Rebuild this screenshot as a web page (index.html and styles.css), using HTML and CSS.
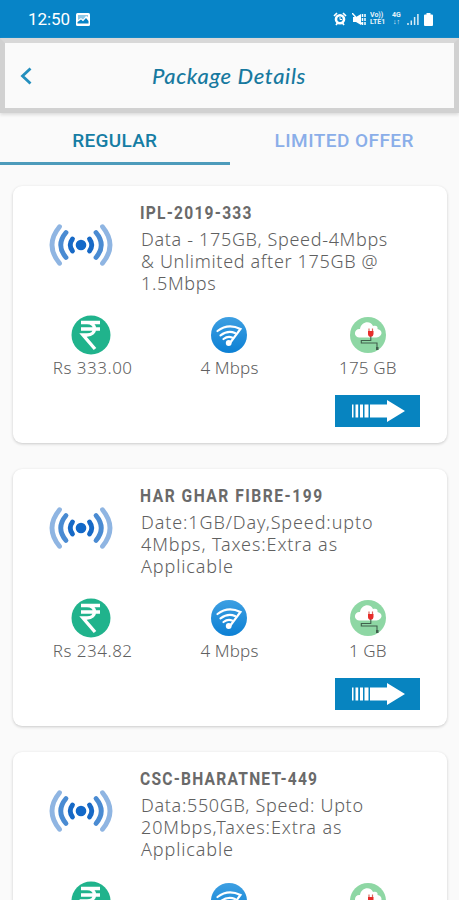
FILE: index.html
```html
<!DOCTYPE html>
<html lang="en">
<head>
<meta charset="utf-8">
<meta name="viewport" content="width=device-width">
<title>Package Details</title>
<link rel="stylesheet" href="styles.css">
</head>
<body>
<svg class="defs" width="0" height="0" aria-hidden="true">
  <defs>
    <linearGradient id="blue" x1="0" y1="0" x2="0" y2="1"><stop offset="0" stop-color="#3d9fe2"/><stop offset="1" stop-color="#0c80d4"/></linearGradient>
    <symbol id="signal" viewBox="0 0 64 44">
      <circle cx="32" cy="22" r="5.3" fill="#1268c8"/>
      <g fill="none" stroke-width="4.800" stroke-linecap="round">
        <path d="M23.500 16q-4.500 6 0 12M40.500 16q4.500 6 0 12" stroke="#1769c6"/>
        <path d="M17 9.500q-10.500 12.500 0 25M47 9.500q10.500 12.500 0 25" stroke="#4a8bd2"/>
        <path d="M10.500 3.700q-15 18.300 0 36.600M53.500 3.700q15 18.300 0 36.600" stroke="#8fb5e2"/>
      </g>
    </symbol>
    <symbol id="rupee" viewBox="0 0 40 40">
      <circle cx="20" cy="20" r="19.500" fill="#20b38c"/>
      <path d="M10 7.500h19M10 14h19M11 7.500h5c10 0 10 12.500 0 12.500h-4L24 34" fill="none" stroke="#fff" stroke-width="3.400"/>
    </symbol>
    <symbol id="wifi" viewBox="0 0 36 36">
      <circle cx="18" cy="18" r="18" fill="url(#blue)"/>
      <g fill="none" stroke="#fff" stroke-width="2.200" stroke-linecap="round">
        <path d="M6.500 14Q17 6 29.500 12L19 26"/>
        <path d="M9.500 18.300q7.500-5.500 14.500-2.300M12.500 22q4.500-3.500 8.500-1.500"/>
      </g>
      <circle cx="17.700" cy="26" r="2.900" fill="#fff"/>
    </symbol>
    <symbol id="cloud" viewBox="0 0 36 36">
      <circle cx="18" cy="18" r="18" fill="#8ed7a4"/>
      <path d="M9 20.500c-6-1-5-9 1-8.500 1-8 11-9 13-3 4-1 5 1 4.500 3 6 1 5 8-1 8.500z" fill="#fff"/>
      <path d="M19 11.500v3M22.500 11.500v3" stroke="#d9685e" stroke-width="1.200"/>
      <path d="M18 14h5.500v3q0 2.500-2.700 3-2.800-.5-2.800-3z" fill="#e62e2b"/>
      <path d="M20.800 19.500v4h-9.500V26H27v4.500" fill="none" stroke="#41604d" stroke-width="1.100"/>
      <path d="M26 30h2.500v3H26z" fill="#41604d"/>
    </symbol>
    <symbol id="arrow" viewBox="0 0 54 22">
      <path d="M1 4.500h1.500v13H1zM4.500 4.500h2.700v13H4.500zM9 4.500h3v13H9zM13.500 4.500h4v13h-4zM19 4.500h17V0l18 11-18 11v-4.500H19z" fill="#fff"/>
    </symbol>
  </defs>
</svg>

<header class="status">
  <span class="time">12:50</span>
  <svg class="photo" viewBox="0 0 14 13"><rect width="14" height="13" rx="1.500" fill="#fff"/><path d="M1.500 10.500V9L5 6.500l2 1.700L10 5l2.500 3v2.500z" fill="#0784c7"/><path d="M2 2h10v2L10 3 7 6.500 5 5 2 7z" fill="#0784c7" opacity=".45"/></svg>
  <div class="tray">
    <svg class="alarm" viewBox="0 0 14 14"><path d="M1 4l3-3M13 4l-3-3M3 13l1.500-2M11 13l-1.500-2" stroke="#fff" stroke-width="1.700"/><circle cx="7" cy="7.300" r="4" fill="#0784c7" stroke="#fff" stroke-width="2.600"/><path d="M7 5v2.500h2" fill="none" stroke="#fff"/></svg>
    <svg class="mute" viewBox="0 0 14 13"><path d="M1 4h3l5-3v11L4 9H1z" fill="#fff"/><path d="M0 0l10 11" stroke="#fff" stroke-width="1.500"/><path d="M10.500 1v11M13 1v11" stroke="#fff" stroke-width="1.500" stroke-dasharray="3 1"/></svg>
    <span class="volte">Vo))<br>LTE1</span>
    <span class="fourg">4G<br>↓↑</span>
    <svg class="bars" viewBox="0 0 12 13"><path d="M1 10v2M4.300 7.500V12M7.600 4v8M10.900 1v11" stroke="#fff" stroke-width="1.500" opacity=".85"/></svg>
    <svg class="battery" viewBox="0 0 9 13"><path d="M2.500 0h4v1.500H8q1 0 1 1V12q0 1-1 1H1q-1 0-1-1V2.500q0-1 1-1h1.500z" fill="#fff"/></svg>
  </div>
</header>

<div class="toolbar">
  <svg class="back" viewBox="0 0 12 18"><path d="M10.500 1.500L2.500 9l8 7.500" fill="none" stroke="#248fbe" stroke-width="2.800"/></svg>
  <h1>Package Details</h1>
</div>

<nav class="tabs">
  <a class="tab active">REGULAR</a>
  <a class="tab">LIMITED OFFER</a>
</nav>

<main class="list">
  <article class="card">
    <div class="top">
      <svg class="signal"><use href="#signal"/></svg>
      <div class="info">
        <h2>IPL-2019-333</h2>
        <p class="mixed"><span>Data - 175GB, Speed-4Mbps</span><span>&amp; Unlimited after 175GB @</span><span>1.5Mbps</span></p>
      </div>
    </div>
    <div class="stats">
      <div class="stat"><svg class="rupee"><use href="#rupee"/></svg><span class="price">Rs 333.00</span></div>
      <div class="stat"><svg><use href="#wifi"/></svg><span>4 Mbps</span></div>
      <div class="stat"><svg><use href="#cloud"/></svg><span>175 GB</span></div>
    </div>
    <a class="go"><svg><use href="#arrow"/></svg></a>
  </article>

  <article class="card">
    <div class="top">
      <svg class="signal"><use href="#signal"/></svg>
      <div class="info">
        <h2 class="wide">HAR GHAR FIBRE-199</h2>
        <p><span>Date:1GB/Day,Speed:upto</span><span>4Mbps, Taxes:Extra as</span><span>Applicable</span></p>
      </div>
    </div>
    <div class="stats">
      <div class="stat"><svg class="rupee"><use href="#rupee"/></svg><span class="price">Rs 234.82</span></div>
      <div class="stat"><svg><use href="#wifi"/></svg><span>4 Mbps</span></div>
      <div class="stat"><svg><use href="#cloud"/></svg><span>1 GB</span></div>
    </div>
    <a class="go"><svg><use href="#arrow"/></svg></a>
  </article>

  <article class="card">
    <div class="top">
      <svg class="signal"><use href="#signal"/></svg>
      <div class="info">
        <h2>CSC-BHARATNET-449</h2>
        <p><span class="mixed">Data:550GB, Speed: Upto</span><span>20Mbps,Taxes:Extra as</span><span>Applicable</span></p>
      </div>
    </div>
    <div class="stats">
      <div class="stat"><svg class="rupee"><use href="#rupee"/></svg></div>
      <div class="stat"><svg><use href="#wifi"/></svg></div>
      <div class="stat"><svg><use href="#cloud"/></svg></div>
    </div>
  </article>
</main>
</body>
</html>
```
FILE: styles.css
```css
* { box-sizing: border-box; }
html, body { height: 900px; overflow: hidden; }
body { margin: 0; background: #fafafa; font-family: "Noto Sans", sans-serif; color: #606060; display: flex; flex-direction: column; }
svg { display: block; flex: none; }
.defs { position: absolute; }

.status { flex: none; height: 38px; background: #0784c7; color: #fff; display: flex; align-items: center; padding: 0 26px 0 28px; }
.time { font: 400 17px/20px Roboto, sans-serif; width: 48px; letter-spacing: -.1px; }
.photo { width: 14px; height: 13px; }
.tray { margin-left: auto; display: flex; align-items: center; }
.alarm { width: 14px; height: 14px; margin-right: 5px; }
.mute { width: 14px; height: 13px; margin-right: 4px; }
.volte, .fourg { font: 700 7px/7px Roboto, sans-serif; width: 20px; opacity: .9; white-space: nowrap; }
.fourg { width: 17px; text-align: center; padding-right: 4px; }
.bars { width: 12px; height: 13px; margin-right: 5px; }
.battery { width: 9px; height: 13px; }

.toolbar { flex: none; height: 75px; border: 5px solid #d1d1d1; border-top-color: #d8d8d8; box-shadow: 0 2px 3px #ddd; display: flex; align-items: center; padding-left: 15px; background: #fafafa; }
.back { width: 12px; height: 18px; }
h1 { margin: 0; flex: 1; padding-right: 28px; text-align: center; color: #17799f; font: italic 500 22px/28px Lato, sans-serif; letter-spacing: .65px; }

.tabs { flex: none; display: flex; height: 52px; }
.tab { flex: 1; text-align: center; font: 500 19px/22px Roboto, sans-serif; padding-top: 17px; color: #8aaee9; letter-spacing: .45px; border-bottom: 3px solid transparent; }
.tab.active { color: #157da4; border-color: #4d9bbb; letter-spacing: .3px; }

.list { flex: 1; min-height: 0; overflow: hidden; padding: 21px 12px 0 13px; display: flex; flex-direction: column; gap: 26px; }
.card { height: 257px; flex: none; background: #fff; border-radius: 9px; box-shadow: 0 1px 3px #c9c9c9; padding-top: 16px; }
.top { display: flex; height: 115px; }
.signal { width: 64px; height: 44px; margin: 21px 27px 0 36px; }
h2 { margin: 0; font: 700 19px/21px Roboto, sans-serif; color: #6a6a6a; white-space: nowrap; transform: scaleX(.82); transform-origin: left; letter-spacing: 1.5px; }
h2.wide { letter-spacing: 1.85px; }
p { margin: 5px 0 0 1px; font-size: 18px; line-height: 22px; font-weight: 300; white-space: nowrap; letter-spacing: .89px; }
p.mixed, .mixed { letter-spacing: .67px; }
p span { display: block; }
.stats { display: flex; height: 62px; padding: 0 10px 0 9px; }
.stat { flex: 1; display: flex; flex-direction: column; align-items: center; font-weight: 300; font-size: 17px; line-height: 22px; letter-spacing: .15px; }
.price { letter-spacing: .5px; padding-left: 3px; }
.stat svg { width: 36px; height: 36px; margin: 0 0 4px; }
.stat .rupee { width: 40px; height: 40px; margin: -2px 0 2px; }
.go { display: flex; width: 85px; height: 32px; margin: 16px 27px 0 auto; background: #0784c0; align-items: center; justify-content: center; }
.go svg { width: 54px; height: 22px; }
```
